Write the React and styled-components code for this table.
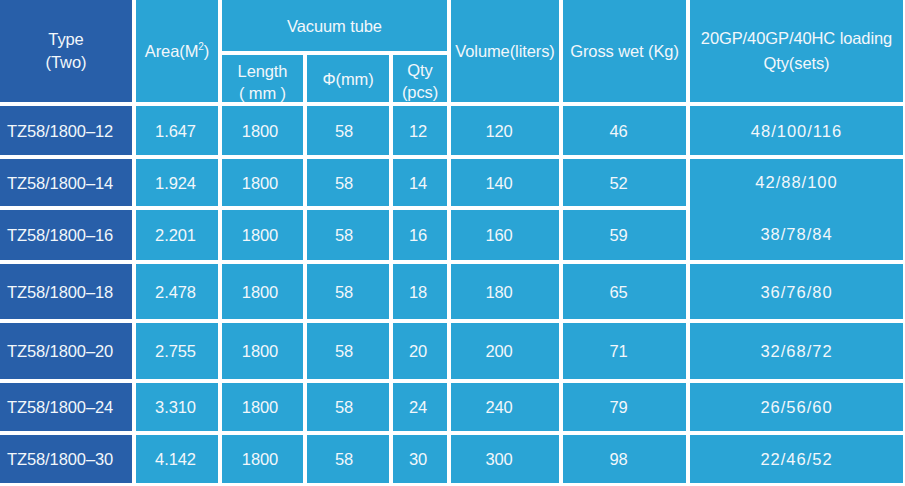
import React from "react";
import styled, { createGlobalStyle } from "styled-components";

const Global = createGlobalStyle`
  html, body { margin: 0; padding: 0; background: #ffffff; }
  body { font-family: "Liberation Sans", Arial, sans-serif; }
`;

const Table = styled.div`
  display: grid;
  grid-template-columns: 132px 82px 81px 82px 54px 108px 123px 213px;
  grid-template-rows: 51px 47px 49px 47px 50px 55px 56px 48px 48px;
  gap: 4px;
  width: 903px;
  color: #f2f7fb;
  font-size: 16.5px;
  letter-spacing: -0.1px;
`;

const Cell = styled.div`
  grid-column: ${(p) => p.$col} / span ${(p) => p.$cspan || 1};
  grid-row: ${(p) => p.$row} / span ${(p) => p.$rspan || 1};
  background: ${(p) => (p.$dark ? "#285fa9" : "#2aa4d5")};
  display: flex;
  flex-direction: column;
  align-items: ${(p) => (p.$left ? "flex-start" : "center")};
  justify-content: center;
  text-align: center;
  line-height: ${(p) => p.$lh || 22}px;
  letter-spacing: ${(p) => (p.$wide ? "1px" : "-0.1px")};
  padding-left: ${(p) => (p.$left ? "7px" : "0")};
  padding-right: ${(p) => (p.$shift ? `${p.$shift}px` : "0")};
  padding-top: ${(p) => (p.$down ? `${p.$down}px` : "0")};
  box-sizing: border-box;
  white-space: nowrap;
`;

const Sup = styled.sup`
  font-size: 10px;
  line-height: 0;
  position: relative;
  top: -1px;
`;

const Merged = styled.div`
  grid-column: 8;
  grid-row: ${(p) => p.$row} / span 2;
  background: #2aa4d5;
  display: grid;
  grid-template-rows: 47px 49px;
  row-gap: 4px;
  letter-spacing: 1px;
`;

const MergedLine = styled.div`
  display: flex;
  align-items: center;
  justify-content: center;
`;

const rows = [
  ["TZ58/1800\u201312", "1.647", "1800", "58", "12", "120", "46", "48/100/116"],
  ["TZ58/1800\u201314", "1.924", "1800", "58", "14", "140", "52", "42/88/100"],
  ["TZ58/1800\u201316", "2.201", "1800", "58", "16", "160", "59", "38/78/84"],
  ["TZ58/1800\u201318", "2.478", "1800", "58", "18", "180", "65", "36/76/80"],
  ["TZ58/1800\u201320", "2.755", "1800", "58", "20", "200", "71", "32/68/72"],
  ["TZ58/1800\u201324", "3.310", "1800", "58", "24", "240", "79", "26/56/60"],
  ["TZ58/1800\u201330", "4.142", "1800", "58", "30", "300", "98", "22/46/52"],
];

const shifts = [0, 3, 5, 8, 4, 12, 12, 0];

export default function App() {
  return (
    <>
      <Global />
      <Table>
        <Cell $dark $col={1} $row={1} $rspan={2} $lh={23}>
          <span>Type</span>
          <span>(Two)</span>
        </Cell>
        <Cell $col={2} $row={1} $rspan={2}>
          <span>
            Area(M<Sup>2</Sup>)
          </span>
        </Cell>
        <Cell $col={3} $row={1} $cspan={3}>Vacuum tube</Cell>
        <Cell $col={6} $row={1} $rspan={2}>Volume(liters)</Cell>
        <Cell $col={7} $row={1} $rspan={2}>Gross wet (Kg)</Cell>
        <Cell $col={8} $row={1} $rspan={2} $lh={25}>
          <span>20GP/40GP/40HC loading</span>
          <span>Qty(sets)</span>
        </Cell>
        <Cell $col={3} $row={2} $down={6}>
          <span>Length</span>
          <span>( mm )</span>
        </Cell>
        <Cell $col={4} $row={2}>{"\u03A6(mm)"}</Cell>
        <Cell $col={5} $row={2} $down={5}>
          <span>Qty</span>
          <span>(pcs)</span>
        </Cell>

        {rows.map((r, i) => {
          const rowIdx = i + 3;
          return r.map((v, c) => {
            if (c === 7 && (i === 1 || i === 2)) {
              if (i === 2) return null;
              return (
                <Merged key={`${i}-${c}`} $row={rowIdx}>
                  <MergedLine>{rows[1][7]}</MergedLine>
                  <MergedLine>{rows[2][7]}</MergedLine>
                </Merged>
              );
            }
            return (
              <Cell
                key={`${i}-${c}`}
                $col={c + 1}
                $row={rowIdx}
                $dark={c === 0}
                $left={c === 0}
                $wide={c === 7}
                $shift={shifts[c]}
              >
                {v}
              </Cell>
            );
          });
        })}
      </Table>
    </>
  );
}
